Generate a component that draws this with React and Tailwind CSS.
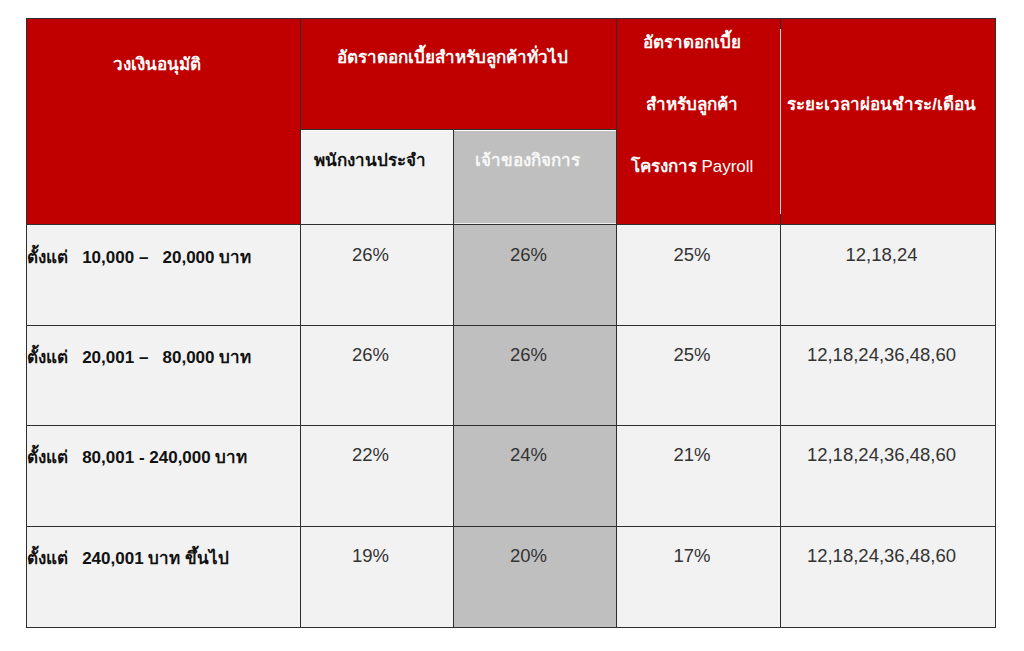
export default function App() {
  const rows = [
    { label: "ตั้งแต่   10,000 –   20,000 บาท", a: "26%", b: "26%", c: "25%", d: "12,18,24", h: "h-[100px]", pt: "pt-[18px]", lpt: "pt-[21px]" },
    { label: "ตั้งแต่   20,001 –   80,000 บาท", a: "26%", b: "26%", c: "25%", d: "12,18,24,36,48,60", h: "h-[99px]", pt: "pt-[17px]", lpt: "pt-[20px]" },
    { label: "ตั้งแต่   80,001 - 240,000 บาท", a: "22%", b: "24%", c: "21%", d: "12,18,24,36,48,60", h: "h-[100px]", pt: "pt-[17px]", lpt: "pt-[20px]" },
    { label: "ตั้งแต่   240,001 บาท ขึ้นไป", a: "19%", b: "20%", c: "17%", d: "12,18,24,36,48,60", h: "h-[100px]", pt: "pt-[17px]", lpt: "pt-[20px]" },
  ];
  const font = { fontFamily: '"Liberation Sans", Arial, sans-serif' };
  return (
    <div className="w-[1024px] h-[651px] bg-white pt-[18px] pl-[26px]" style={font}>
      <div className="grid w-[970px] grid-cols-[273px_152px_162px_163px_214px] grid-rows-[110px_94px] gap-px bg-[#2e2e2e] p-px">
        <div className="row-span-2 bg-[#c00000] text-white font-bold text-[17px] leading-[24px] flex justify-center pt-[34px] pr-[13px]">
          วงเงินอนุมัติ
        </div>
        <div className="col-span-2 bg-[#c00000] text-white font-bold text-[17px] leading-[24px] flex justify-center pt-[27px] pr-[13px]">
          อัตราดอกเบี้ยสำหรับลูกค้าทั่วไป
        </div>
        <div className="row-span-2 bg-[#c00000] text-white font-bold text-[17px] leading-[24px] flex flex-col items-center gap-[38px] pt-[12px] pr-[13px]">
          <div>อัตราดอกเบี้ย</div>
          <div>สำหรับลูกค้า</div>
          <div>
            โครงการ <span className="font-normal">Payroll</span>
          </div>
        </div>
        <div className="relative row-span-2 bg-[#c00000] text-white font-bold text-[17px] leading-[24px] flex justify-center pt-[74px] pr-[13px] before:absolute before:left-[-1px] before:top-[10px] before:bottom-[10px] before:w-px before:bg-[#f3d6d6]">
          ระยะเวลาผ่อนชำระ/เดือน
        </div>
        <div className="bg-[#f2f2f2] text-[#111] font-bold text-[17px] leading-[24px] pt-[19px] pl-[13px] shadow-[inset_0_1px_0_#ffffff]">
          พนักงานประจำ
        </div>
        <div className="bg-[#bfbfbf] text-[#f7f7f7] font-bold text-[17px] leading-[24px] pt-[19px] pl-[21px] shadow-[inset_0_1px_0_#ffffff,inset_0_-1px_0_#eeeeee]">
          เจ้าของกิจการ
        </div>
        {rows.map((r, i) => (
          <div key={i} className="contents">
            <div className={`${r.h} bg-[#f2f2f2] text-[#111] font-bold text-[17px] leading-[24px] whitespace-pre ${r.lpt}`}>
              {r.label}
            </div>
            <div className={`${r.h} bg-[#f2f2f2] text-[#333] text-[18.5px] leading-[24px] flex justify-center pr-[13px] ${r.pt}`}>{r.a}</div>
            <div className={`${r.h} bg-[#bfbfbf] text-[#333] text-[18.5px] leading-[24px] flex justify-center pr-[13px] ${r.pt}`}>{r.b}</div>
            <div className={`${r.h} bg-[#f2f2f2] text-[#333] text-[18.5px] leading-[24px] flex justify-center pr-[13px] ${r.pt}`}>{r.c}</div>
            <div className={`${r.h} bg-[#f2f2f2] text-[#333] text-[18.5px] leading-[24px] flex justify-center pr-[13px] ${r.pt}`}>{r.d}</div>
          </div>
        ))}
      </div>
    </div>
  );
}
